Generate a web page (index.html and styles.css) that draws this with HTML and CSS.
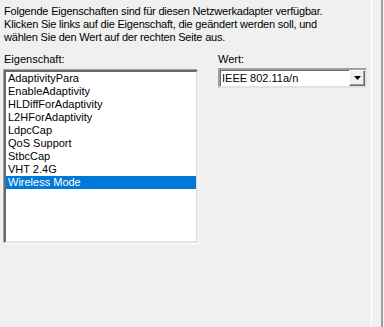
FILE: index.html
```html
<!DOCTYPE html>
<html lang="de">
<head>
<meta charset="utf-8">
<link rel="stylesheet" href="styles.css">
</head>
<body>
<div class="page">
  <div class="content">
    <p class="intro">Folgende Eigenschaften sind für diesen Netzwerkadapter verfügbar.<br>Klicken Sie links auf die Eigenschaft, die geändert werden soll, und<br>wählen Sie den Wert auf der rechten Seite aus.</p>
    <div class="columns">
      <div class="col-left">
        <div class="label">Eigenschaft:</div>
        <ul class="listbox">
          <li>AdaptivityPara</li>
          <li>EnableAdaptivity</li>
          <li>HLDiffForAdaptivity</li>
          <li>L2HForAdaptivity</li>
          <li>LdpcCap</li>
          <li>QoS Support</li>
          <li>StbcCap</li>
          <li>VHT 2.4G</li>
          <li class="selected">Wireless Mode</li>
        </ul>
      </div>
      <div class="col-right">
        <div class="label">Wert:</div>
        <div class="combo">
          <span class="combo-text">IEEE 802.11a/n</span>
          <span class="combo-btn"><svg width="7" height="4" viewBox="0 0 7 4"><path d="M0 0h7L3.5 4z" fill="#000"/></svg></span>
        </div>
      </div>
    </div>
  </div>
  <div class="rail"></div>
  <div class="edge"></div>
</div>
</body>
</html>
```
FILE: styles.css
```css
html, body {
  margin: 0;
  padding: 0;
  background: #f0f0f0;
}
body {
  font-family: "Liberation Sans", Arial, sans-serif;
  font-size: 11px;
  line-height: 13px;
  color: #000;
}
.page {
  display: flex;
  height: 327px;
  overflow: hidden;
}
.content {
  width: 367px;
  padding: 5px 0 0 4px;
}
.intro {
  margin: 0 0 9px 0;
  white-space: nowrap;
  letter-spacing: -0.2px;
}
.columns {
  display: flex;
  gap: 20px;
}
.col-left {
  width: 194px;
}
.col-right {
  width: 149px;
}
.label {
  height: 13px;
}
.listbox {
  list-style: none;
  margin: 4px 0 0 0;
  padding: 0;
  background: #fff;
  border-style: solid;
  border-width: 2px;
  border-color: #696969 #e3e3e3 #e3e3e3 #696969;
  box-shadow: -1px -1px 0 #a0a0a0, 1px 1px 0 #fff;
  box-sizing: border-box;
  height: 173px;
}
.listbox li {
  height: 13px;
  padding-left: 2px;
  white-space: nowrap;
}
.listbox li.selected {
  background: #0078d7;
  color: #fff;
}
.combo {
  margin-top: 2px;
  height: 20px;
  box-sizing: border-box;
  display: flex;
  align-items: stretch;
  background: #fff;
  border-style: solid;
  border-width: 2px;
  border-color: #a0a0a0 #e3e3e3 #e3e3e3 #a0a0a0;
  box-shadow: inset 1px 1px 0 #696969;
}
.combo-text {
  flex: 1;
  padding: 1px 0 0 2px;
  line-height: 14px;
}
.combo-btn {
  width: 16px;
  box-sizing: border-box;
  background: #f0f0f0;
  border-style: solid;
  border-width: 1px;
  border-color: #fff #696969 #696969 #fff;
  box-shadow: inset -1px -1px 0 #a0a0a0;
  display: flex;
  align-items: center;
  justify-content: center;
}
.rail {
  width: 9px;
  border-left: 1px solid #fff;
}
.edge {
  width: 2px;
  background: #a0a0a0;
}
```
